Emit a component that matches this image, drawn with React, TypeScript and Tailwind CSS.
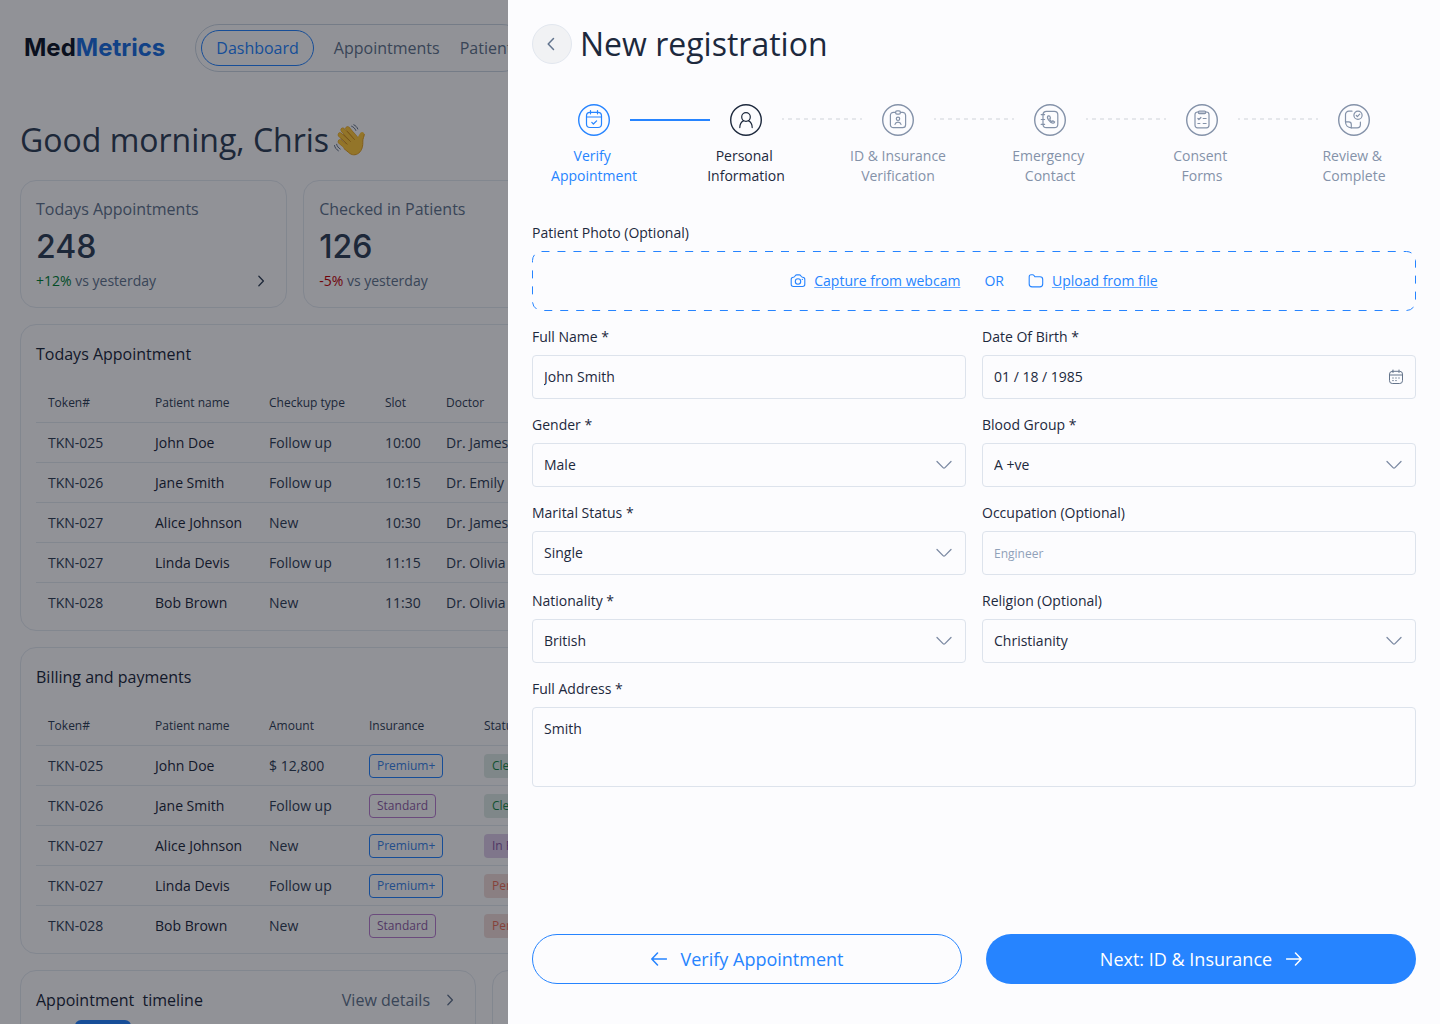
import { useId } from 'react';
import type { ReactNode } from 'react';

interface FieldProps {
  label: string;
  value?: string;
  placeholder?: string;
  icon?: ReactNode;
}

interface SelectFieldProps {
  label: string;
  options: string[];
}

type StepState = 'done' | 'current' | 'todo';

interface Step {
  label: string;
  state: StepState;
  icon: ReactNode;
}

const steps: Step[] = [
  {
    label: 'Verify \nAppointment',
    state: 'done',
    icon: (
      <>
        <rect x="2.5" y="2.3" width="15" height="15.2" rx="3.5" />
        <path d="M6.5.6v3.2M13.5.6v3.2M2.5 7h15M7.8 12.4l1.6 1.6 3.2-3.2" />
      </>
    ),
  },
  {
    label: 'Personal \nInformation',
    state: 'current',
    icon: (
      <>
        <circle cx="10" cy="7" r="4.3" />
        <path d="M3.8 17.6c0-3.2 1.4-5.7 3.9-7M16.2 17.6c0-3.2-1.4-5.7-3.9-7" />
      </>
    ),
  },
  {
    label: 'ID & Insurance\nVerification',
    state: 'todo',
    icon: (
      <>
        <path d="M7.6 2.3H5.4a3 3 0 0 0-3 3v9.4a3 3 0 0 0 3 3h9.2a3 3 0 0 0 3-3V5.3a3 3 0 0 0-3-3h-2.2" />
        <rect x="7.6" y=".8" width="4.8" height="3.4" rx="1.4" />
        <circle cx="10" cy="8.8" r="1.7" />
        <path d="M7 14.3c.4-1.6 1.6-2.1 3-2.1s2.6.5 3 2.1" />
      </>
    ),
  },
  {
    label: 'Emergency \nContact',
    state: 'todo',
    icon: (
      <>
        <rect x="3" y="1.3" width="14.8" height="16.4" rx="3.5" />
        <path d="M1.2 4.6h3.4M1.2 9.5h3.4M1.2 14.4h3.4" />
        <path d="M8.2 5.8c-1 .7-1 2.2.3 4.2 1.5 2.2 3.2 3.4 4.7 3.2.8-.1 1.3-.6 1.5-1.3l-1.9-1.1-.9.8c-.9-.3-2-1.7-2.2-2.7l.8-.8-.8-2.1z" />
      </>
    ),
  },
  {
    label: 'Consent \nForms',
    state: 'todo',
    icon: (
      <>
        <rect x="3" y="2" width="14" height="15.8" rx="2.5" />
        <rect x="6.2" y="1" width="7.6" height="2.6" rx="1.3" />
        <path d="M5.9 8.5l1 1 2-2M11.2 8.5h2.9M5.9 13.5h2M11.2 13.5h2.9" />
      </>
    ),
  },
  {
    label: 'Review & \nComplete',
    state: 'todo',
    icon: (
      <>
        <path d="M8 1.2H4.9a3.4 3.4 0 0 0-3.4 3.4v7.2M7.3 17.8h5.8a3.3 3.3 0 0 0 3.3-3.3v-2.3" />
        <path d="M1.5 11.8h3.2c1.7 0 2.6.9 2.6 2.6v3.4c-3.4 0-5.8-2.4-5.8-6z" />
        <circle cx="14" cy="5.3" r="4.1" />
        <path d="M12.3 5.5l1.1 1.1 2.3-2.4" />
      </>
    ),
  },
];

const stepColors: Record<StepState, string> = {
  done: 'text-[#2684ff]',
  current: 'text-slate-800',
  todo: 'text-[#8492a9]',
};

const stats = [
  { label: 'Todays Appointments', value: '248', change: '+12%', up: true },
  { label: 'Checked in Patients', value: '126', change: '-5%', up: false },
];

const appointments = [
  ['TKN-025', 'John Doe', 'Follow up', '10:00', 'Dr. James'],
  ['TKN-026', 'Jane Smith', 'Follow up', '10:15', 'Dr. Emily'],
  ['TKN-027', 'Alice Johnson', 'New', '10:30', 'Dr. James'],
  ['TKN-027', 'Linda Devis', 'Follow up', '11:15', 'Dr. Olivia'],
  ['TKN-028', 'Bob Brown', 'New', '11:30', 'Dr. Olivia'],
];

const bills = [
  ['TKN-025', 'John Doe', '$ 12,800', 'Premium+', 'Cleared'],
  ['TKN-026', 'Jane Smith', 'Follow up', 'Standard', 'Cleared'],
  ['TKN-027', 'Alice Johnson', 'New', 'Premium+', 'In Progress'],
  ['TKN-027', 'Linda Devis', 'Follow up', 'Premium+', 'Pending'],
  ['TKN-028', 'Bob Brown', 'New', 'Standard', 'Pending'],
];

const badgeColors: Record<string, string> = {
  'Premium+': 'border-[#2684ff] text-[#3a84e8]',
  Standard: 'border-[#b97fd0] text-[#8f5ea6]',
  Cleared: 'border-transparent bg-[#dce8e4] text-[#1c8a4c]',
  'In Progress': 'border-transparent bg-[#dccbe8] text-[#8a5aa6]',
  Pending: 'border-transparent bg-[#efdad8] text-[#e8705c]',
};

function Chevron({ className }: { className: string }) {
  return (
    <svg viewBox="0 0 8 14" fill="none" stroke="currentColor" strokeWidth="1.5" strokeLinecap="round" strokeLinejoin="round" className={className}>
      <path d="M1.5 1.5L6.8 7l-5.3 5.5" />
    </svg>
  );
}

function WavingHand() {
  return (
    <svg viewBox="0 0 32 34" className="h-[34px] w-8" fill="none" strokeLinecap="round" strokeLinejoin="round">
      <g stroke="#e3a01f" strokeWidth="4.6">
        <path d="M7 18.8l9 7.2" />
        <path d="M7 11.8l10 9.2" />
        <path d="M9.8 7l10 11" />
        <path d="M14.6 5.6l9 10.4" />
      </g>
      <g stroke="#ffc93c" strokeWidth="3.7">
        <path d="M7 18.8l9 7.2" />
        <path d="M7 11.8l10 9.2" />
        <path d="M9.8 7l10 11" />
        <path d="M14.6 5.6l9 10.4" />
      </g>
      <path d="M23.5 16c1.9-1.9 2.4-4.5 4-6.2 1.5-1.5 4-.4 3.8 1.7-.3 2.5-1.5 4-1.5 6.5.2 4.8-.6 9.2-4 12-3.2 2.6-7.2 2.3-10-.4L10 24.5l8-8z" fill="#ffc93c" />
      <path d="M11 25.6l4.8 4c2.8 2.7 6.8 3 10 .4 3.4-2.8 4.2-7.2 4-12 0-2.5 1.2-4 1.5-6.5" stroke="#e3a01f" strokeWidth="1" />
      <path d="M7.8 15.5l6.4 5.7M10.5 11.5l7 7M14.5 8.5l7 8" stroke="#c98716" strokeWidth=".8" />
      <path d="M18.6 3.2c2 .8 3.4 2.2 4.2 4.2M20.8 1.8c2 .9 3.3 2.3 4 4.2M1.5 22.5c.5 2.3 1.8 4 3.9 5.3M3.6 21.3c.5 2 1.7 3.5 3.6 4.7" stroke="#64748b" strokeWidth="1" />
    </svg>
  );
}

function DataTable({ title, headers, widths, rows }: { title: string; headers: string[]; widths: string[]; rows: string[][] }) {
  return (
    <section className="col-span-2 rounded-2xl border border-slate-200 px-[15px] pt-[17px] pb-2">
      <h2 className="mb-4 text-base leading-6 font-medium text-slate-800">{title}</h2>
      <table className="w-full table-fixed text-left text-sm">
        <thead>
          <tr className="h-10 border-b border-slate-200 text-xs">
            {headers.map((header, i) => (
              <th key={header} className={`${widths[i]} pt-[2px] pl-3 font-normal`}>
                {header}
              </th>
            ))}
          </tr>
        </thead>
        <tbody>
          {rows.map((row, i) => (
            <tr key={i} className="h-10 border-b border-slate-200 last:border-0">
              {row.map((cell, j) => (
                <td key={j} className={`pt-[2px] pl-3 ${j === 1 ? 'font-medium text-slate-800' : ''}`}>
                  {badgeColors[cell] ? (
                    <span className={`inline-flex h-6 items-center rounded border px-[7px] align-middle text-xs ${badgeColors[cell]}`}>{cell}</span>
                  ) : (
                    cell
                  )}
                </td>
              ))}
            </tr>
          ))}
        </tbody>
      </table>
    </section>
  );
}

function Dashboard() {
  return (
    <div className="h-screen overflow-hidden bg-[#fbfbfd] text-slate-700">
      <header className="flex h-[92px] items-center gap-[30px] bg-[#fcfcfe] px-6 pt-1">
        <div className="font-['Inter',sans-serif] text-2xl font-bold text-slate-900">
          Med<span className="text-[#1d6fe0]">Metrics</span>
        </div>
        <nav className="flex h-12 items-center rounded-full border border-slate-300 px-[5px] text-base text-slate-500">
          <a href="#dashboard" className="flex h-9 items-center rounded-full border border-[#2684ff] px-[14px] text-[#2684ff]">
            Dashboard
          </a>
          <a href="#appointments" className="ml-5">Appointments</a>
          <a href="#patients" className="ml-5">Patients</a>
        </nav>
      </header>

      <main className="px-5 pt-6">
        <h1 className="flex h-12 items-center gap-1 text-[32px]">
          Good morning, Chris <WavingHand />
        </h1>

        <div className="mt-4 grid grid-cols-5 gap-4">
          {stats.map((stat) => (
            <section key={stat.label} className="rounded-2xl border border-slate-200 px-[15px] py-4">
              <h2 className="text-base leading-6 text-slate-500">{stat.label}</h2>
              <p className="mt-2 mb-[6px] font-['Inter',sans-serif] text-[32px] leading-9 font-medium">{stat.value}</p>
              <p className="flex items-center justify-between pr-[6px] text-sm leading-5 text-slate-500">
                <span>
                  <span className={stat.up ? 'text-green-700' : 'text-red-700'}>{stat.change}</span> vs yesterday
                </span>
                <Chevron className="h-3 w-2 text-slate-700" />
              </p>
            </section>
          ))}
        </div>

        <div className="mt-4 grid grid-cols-3 gap-4">
          <DataTable
            title="Todays Appointment"
            headers={['Token#', 'Patient name', 'Checkup type', 'Slot', 'Doctor']}
            widths={['w-[107px]', 'w-[114px]', 'w-[116px]', 'w-[61px]', '']}
            rows={appointments}
          />
          <DataTable
            title="Billing and payments"
            headers={['Token#', 'Patient name', 'Amount', 'Insurance', 'Status']}
            widths={['w-[107px]', 'w-[114px]', 'w-[100px]', 'w-[115px]', '']}
            rows={bills}
          />
          <section className="col-start-1 h-80 rounded-2xl border border-slate-200 px-[15px] pt-[17px]">
            <div className="flex items-center justify-between pr-[6px] leading-6">
              <h2 className="font-medium whitespace-pre text-slate-800">Appointment  timeline</h2>
              <a href="#timeline" className="flex items-center gap-4 text-slate-500">
                View details
                <Chevron className="h-3 w-2" />
              </a>
            </div>
            <div className="mt-2 ml-[39px] h-8 w-14 rounded-md bg-[#2684ff]" />
          </section>
          <section className="h-80 rounded-2xl border border-slate-200" />
        </div>
      </main>
    </div>
  );
}

const controlClass =
  'h-11 w-full rounded border border-[#dde3ec] bg-transparent px-[11px] text-sm text-slate-800 placeholder:text-xs placeholder:text-slate-400';

function TextField({ label, value, placeholder, icon }: FieldProps) {
  const id = useId();
  return (
    <div className="flex flex-col gap-2">
      <label htmlFor={id} className="text-sm leading-5">{label}</label>
      <div className="relative">
        <input id={id} type="text" defaultValue={value} placeholder={placeholder} className={`${controlClass} pb-[2px]`} />
        {icon}
      </div>
    </div>
  );
}

function SelectField({ label, options }: SelectFieldProps) {
  const id = useId();
  return (
    <div className="flex flex-col gap-2">
      <label htmlFor={id} className="text-sm leading-5">{label}</label>
      <div className="relative">
        <select id={id} className={`${controlClass} appearance-none`}>
          {options.map((option) => (
            <option key={option}>{option}</option>
          ))}
        </select>
        <svg viewBox="0 0 16 10" fill="none" stroke="currentColor" strokeWidth="1.3" strokeLinecap="round" strokeLinejoin="round" className="pointer-events-none absolute top-[17px] right-[14px] h-[10px] w-4 text-[#7c8aa3]">
          <path d="M1 1.5l6 6.1c.6.6 1.4.6 2 0l6-6.1" />
        </svg>
      </div>
    </div>
  );
}

function Stepper() {
  return (
    <ol className="mt-10 flex justify-center">
      {steps.map((step, i) => (
        <li key={step.label} className="flex">
          {i > 0 && (
            <span
              className={
                i === 1
                  ? 'mt-[15px] h-[2px] w-20 bg-[#2684ff]'
                  : 'mt-[14px] h-[2px] w-20 bg-[repeating-linear-gradient(90deg,#e5e7eb_0_2px,transparent_2px_6px,#e5e7eb_6px_8px)]'
              }
            />
          )}
          <div className={`flex w-[72px] flex-col items-center gap-[10px] ${stepColors[step.state]}`}>
            <svg viewBox="-6 -6 32 32" fill="none" stroke="currentColor" strokeWidth="1.2" strokeLinecap="round" strokeLinejoin="round" className="h-8 w-8">
              <circle cx="10" cy="10" r="15.3" strokeWidth="1.4" />
              {step.icon}
            </svg>
            <span className="text-center text-sm leading-5 whitespace-pre">{step.label}</span>
          </div>
        </li>
      ))}
    </ol>
  );
}

function PhotoPicker() {
  return (
    <div className="flex flex-col gap-2">
      <span className="text-sm leading-5">Patient Photo (Optional)</span>
      <div className="relative flex h-[60px] items-center justify-center gap-6 text-sm text-[#2684ff]">
        <svg className="pointer-events-none absolute inset-0 h-full w-full" fill="none">
          <rect x=".5" y=".5" rx="9" pathLength="1872" stroke="#2684ff" strokeDasharray="8 8" className="h-[calc(100%-1px)] w-[calc(100%-1px)]" />
        </svg>
        <a href="#webcam" className="flex items-center gap-2">
          <svg viewBox="0 0 16 16" fill="none" stroke="currentColor" strokeWidth="1.1" strokeLinecap="round" strokeLinejoin="round" className="h-4 w-4">
            <path d="M1.2 6.4c0-1.3.9-2.2 2.2-2.2.9 0 1.3-.4 1.6-1.1.3-.9.8-1.2 1.6-1.2h2.8c.8 0 1.3.3 1.6 1.2.3.7.7 1.1 1.6 1.1 1.3 0 2.2.9 2.2 2.2v4.9c0 1.3-.9 2.2-2.2 2.2H3.4c-1.3 0-2.2-.9-2.2-2.2z" />
            <circle cx="8" cy="8.5" r="2.7" />
            <path d="M12.3 6.4h.1" />
          </svg>
          <span className="underline decoration-[#2684ff]/70">Capture from webcam</span>
        </a>
        <span>OR</span>
        <a href="#upload" className="flex items-center gap-2">
          <svg viewBox="0 0 16 16" fill="none" stroke="currentColor" strokeWidth="1.1" strokeLinecap="round" strokeLinejoin="round" className="h-4 w-4">
            <path d="M1.2 11V3.8c0-1.3.6-2 1.9-2h1.5c.7 0 1 .2 1.4.7l1 1.3h5c1.8 0 2.7.9 2.7 2.6V11c0 2-.9 2.9-2.9 2.9H4.1c-2 0-2.9-.9-2.9-2.9z" />
          </svg>
          <span className="underline decoration-[#2684ff]/70">Upload from file</span>
        </a>
      </div>
    </div>
  );
}

function CalendarIcon() {
  return (
    <svg viewBox="0 0 16 16" fill="none" stroke="currentColor" strokeLinecap="round" strokeLinejoin="round" className="pointer-events-none absolute top-[14px] right-3 h-4 w-4 text-[#64748b]">
      <rect x="1.5" y="2.3" width="13" height="12.2" rx="2.8" />
      <path d="M5 1v2.5M11 1v2.5M1.5 6h13" />
      <path d="M4.7 9h.6M7.7 9h.6M10.7 9h.6M4.7 11.6h.6M7.7 11.6h.6" />
    </svg>
  );
}

function RegistrationDrawer() {
  return (
    <aside className="fixed inset-y-0 right-0 flex w-[932px] max-w-full flex-col bg-[#fcfcfe] px-6 pt-6 pb-10 text-slate-800">
      <div className="flex items-center gap-2">
        <button type="button" aria-label="Back" className="flex h-10 w-10 items-center justify-center rounded-full border border-[#e2e7ef] bg-[#f1f2f4] pr-[2px]">
          <Chevron className="h-[14px] w-2 rotate-180 text-slate-500" />
        </button>
        <h1 className="text-[32px] leading-10">New registration</h1>
      </div>

      <Stepper />

      <form className="mt-[37px] flex grow flex-col gap-4">
        <PhotoPicker />
        <div className="grid grid-cols-2 gap-4">
          <TextField label="Full Name *" value="John Smith" />
          <TextField label="Date Of Birth *" value="01 / 18 / 1985" icon={<CalendarIcon />} />
          <SelectField label="Gender *" options={['Male', 'Female']} />
          <SelectField label="Blood Group *" options={['A +ve', 'B +ve']} />
          <SelectField label="Marital Status *" options={['Single', 'Married']} />
          <TextField label="Occupation (Optional)" placeholder="Engineer" />
          <SelectField label="Nationality *" options={['British', 'Irish']} />
          <SelectField label="Religion (Optional)" options={['Christianity', 'Other']} />
        </div>
        <div className="flex flex-col gap-2">
          <label htmlFor="address" className="text-sm leading-5">Full Address *</label>
          <textarea id="address" defaultValue="Smith" className="h-20 resize-none rounded border border-[#dde3ec] px-[11px] py-[11px] text-sm leading-5" />
        </div>

        <div className="mt-auto grid grid-cols-2 gap-6 text-lg font-medium">
          <button type="button" className="flex h-[50px] items-center justify-center gap-[14px] rounded-full border border-[#2684ff] text-[#2684ff]">
            <svg viewBox="0 0 16 14" fill="none" stroke="currentColor" strokeWidth="1.5" strokeLinecap="round" strokeLinejoin="round" className="h-[14px] w-4">
              <path d="M6.5 1L.8 7l5.7 6M1 7h14.5" />
            </svg>
            Verify Appointment
          </button>
          <button type="submit" className="flex h-[50px] items-center justify-center gap-[14px] rounded-full bg-[#2684ff] text-white">
            Next: ID &amp; Insurance
            <svg viewBox="0 0 16 14" fill="none" stroke="currentColor" strokeWidth="1.5" strokeLinecap="round" strokeLinejoin="round" className="h-[14px] w-4">
              <path d="M9.5 1l5.7 6-5.7 6M15 7H.5" />
            </svg>
          </button>
        </div>
      </form>
    </aside>
  );
}

export default function App() {
  return (
    <div className="font-['Open_Sans',sans-serif]">
      <Dashboard />
      <div className="fixed inset-0 bg-[#050810]/43" />
      <RegistrationDrawer />
    </div>
  );
}
